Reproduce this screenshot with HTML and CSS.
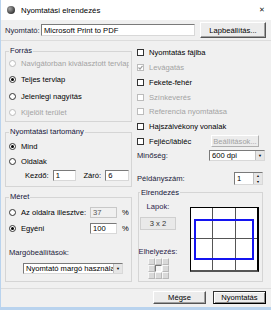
FILE: index.html
```html
<!DOCTYPE html>
<html lang="hu">
<head>
    <meta charset="UTF-8">
    <meta name="viewport" content="width=device-width, initial-scale=1.0">
    <title>Nyomtatási elrendezés</title>
    <link rel="stylesheet" href="styles.css">
</head>
<body>
    <div class="window">
        <div class="titlebar">
            <span class="app-icon"></span>
            <span class="title">Nyomtatási elrendezés</span>
            <span class="close">&#x2715;</span>
        </div>

        <div class="printer-row">
            <span class="printer-label">Nyomtató:</span>
            <div class="field printer-field">Microsoft Print to PDF</div>
            <button class="btn setup-btn">Lapbeállítás...</button>
        </div>

        <div class="main">
            <div class="col-left">
                <fieldset class="group source">
                    <legend>Forrás</legend>
                    <div class="opt disabled"><span class="radio"></span>Navigátorban kiválasztott tervlapok</div>
                    <div class="opt"><span class="radio on"></span>Teljes tervlap</div>
                    <div class="opt"><span class="radio"></span>Jelenlegi nagyítás</div>
                    <div class="opt disabled"><span class="radio"></span>Kijelölt terület</div>
                </fieldset>

                <fieldset class="group range">
                    <legend>Nyomtatási tartomány</legend>
                    <div class="opt"><span class="radio on"></span>Mind</div>
                    <div class="opt"><span class="radio"></span>Oldalak</div>
                    <div class="pages-row">
                        <span class="from-label">Kezdő:</span>
                        <div class="field page-field">1</div>
                        <span class="to-label">Záró:</span>
                        <div class="field page-field">6</div>
                    </div>
                </fieldset>

                <fieldset class="group size">
                    <legend>Méret</legend>
                    <div class="opt"><span class="radio"></span><span class="opt-text">Az oldalra illesztve:</span><div class="field pct-field off">37</div><span class="unit">%</span></div>
                    <div class="opt"><span class="radio on"></span><span class="opt-text">Egyéni</span><div class="field pct-field">100</div><span class="unit">%</span></div>
                    <div class="margin-label">Margóbeállítások:</div>
                    <div class="select margin-select"><span class="select-text">Nyomtató margó használata</span><span class="arrow">&#x25BC;</span></div>
                </fieldset>
            </div>

            <div class="col-right">
                <div class="check-row"><span class="checkbox"></span>Nyomtatás fájlba</div>
                <div class="check-row disabled"><span class="checkbox"><svg width="5" height="5" viewBox="0 0 5 5"><polyline points="0.5,2.5 2,4 4.5,0.8" fill="none" stroke="#a0a0a0" stroke-width="1.2"/></svg></span>Levágatás</div>
                <div class="check-row"><span class="checkbox"></span>Fekete-fehér</div>
                <div class="check-row disabled"><span class="checkbox"></span>Színkeverés</div>
                <div class="check-row disabled"><span class="checkbox"></span>Referencia nyomtatása</div>
                <div class="check-row"><span class="checkbox"></span>Hajszálvékony vonalak</div>
                <div class="check-row"><span class="checkbox"></span>Fejléc/lábléc<button class="btn settings-btn" disabled>Beállítások...</button></div>

                <div class="quality-row">
                    <span>Minőség:</span>
                    <div class="select quality-select"><span class="select-text">600 dpi</span><span class="arrow">&#x25BC;</span></div>
                </div>

                <div class="copies-row">
                    <span>Példányszám:</span>
                    <div class="field spinner"><span class="spin-value">1</span><span class="spin-arrows"><span>&#x25B2;</span><span>&#x25BC;</span></span></div>
                </div>

                <fieldset class="group layout">
                    <legend>Elrendezés</legend>
                    <div class="layout-body">
                        <div class="layout-side">
                            <div class="side-label">Lapok:</div>
                            <div class="pages-box">3 x 2</div>
                            <div class="side-label place-label">Elhelyezés:</div>
                            <div class="place-grid">
                                <span></span><span></span><span></span>
                                <span></span><span class="picked"></span><span></span>
                                <span></span><span></span><span></span>
                            </div>
                        </div>
                        <div class="preview">
                            <span></span><span></span><span></span>
                            <span></span><span></span><span></span>
                            <div class="print-area"></div>
                        </div>
                    </div>
                </fieldset>
            </div>
        </div>

        <div class="footer">
            <button class="btn">Mégse</button>
            <button class="btn default-btn">Nyomtatás</button>
        </div>
    </div>
</body>
</html>
```

FILE: styles.css
```css
body {
    margin: 0;
    background: #b9d3ee;
    font-family: "Liberation Sans", Arial, sans-serif;
    font-size: 7.6px;
    color: #000;
}

.window {
    width: 270px;
    height: 307px;
    margin-left: 1px;
    background: #f0f0f0;
    display: flex;
    flex-direction: column;
}

/* Title bar */
.titlebar {
    height: 20px;
    background: #fff;
    display: flex;
    align-items: center;
    padding: 0 6px 0 6px;
}

.app-icon {
    width: 8px;
    height: 8px;
    border-radius: 50%;
    background: radial-gradient(circle at 35% 35%, #a8a8a8, #3a3a3a 70%, #202020);
}

.title {
    margin-left: 6px;
    font-size: 7.8px;
}

.close {
    margin-left: auto;
    font-size: 7px;
    color: #222;
}

/* Printer */
.printer-row {
    height: 20px;
    display: flex;
    align-items: center;
    padding-left: 4px;
    border-bottom: 1px solid #dcdcdc;
}

.printer-label {
    width: 36px;
    color: #1c1c3a;
}

.field {
    background: #fff;
    border: 1px solid;
    border-color: #7a7a7a #d8d8d8 #d8d8d8 #7a7a7a;
    box-sizing: border-box;
    display: flex;
    align-items: center;
    padding-left: 2px;
    white-space: nowrap;
}

.printer-field {
    width: 154px;
    height: 12px;
}

.btn {
    font-family: inherit;
    font-size: 7.6px;
    color: #000;
    background: #ececec;
    border: 1px solid;
    border-color: #fff #555 #555 #fff;
    box-shadow: inset -1px -1px 0 #a0a0a0;
    padding: 0;
    box-sizing: border-box;
}

.setup-btn {
    margin-left: 5px;
    width: 66px;
    height: 16px;
}

/* Columns */
.main {
    height: 247px;
    display: flex;
    padding-left: 4px;
    border-bottom: 1px solid #dcdcdc;
}

.col-left {
    width: 127px;
    display: flex;
    flex-direction: column;
}

.col-right {
    width: 130px;
    margin-left: 4px;
    padding-top: 4.6px;
    display: flex;
    flex-direction: column;
}

.group {
    margin: 0;
    padding: 0 2px 0 3px;
    border: 1px solid #d5d5d5;
    min-width: 0;
}

.group legend {
    padding: 0 1px;
    line-height: 10px;
    color: #14143a;
}

.opt {
    display: flex;
    align-items: center;
    white-space: nowrap;
    overflow: hidden;
}

.opt.disabled, .check-row.disabled {
    color: #a3a3a3;
}

.radio {
    flex: none;
    width: 7px;
    height: 7px;
    box-sizing: border-box;
    border: 1px solid #333;
    border-radius: 50%;
    background: #fff;
    margin-right: 5px;
    display: flex;
    align-items: center;
    justify-content: center;
}

.opt.disabled .radio {
    border-color: #bcbcbc;
}

.radio.on::after {
    content: "";
    width: 3px;
    height: 3px;
    border-radius: 50%;
    background: #000;
}

.source {
    margin-top: 5px;
    padding-bottom: 0;
}

.source .opt {
    height: 16.5px;
}

.source .opt:first-of-type {
    margin-top: -1px;
}

.range {
    margin-top: 5px;
    padding-top: 2px;
    padding-bottom: 5px;
}

.range .opt {
    height: 15px;
}

.pages-row {
    height: 12px;
    display: flex;
    align-items: center;
    padding-left: 16px;
}

.page-field {
    width: 24px;
    height: 11px;
    margin-left: 4px;
}

.to-label {
    margin-left: 7px;
}

.size {
    margin-top: 5px;
    padding-top: 2px;
    padding-bottom: 7px;
}

.size .opt {
    height: 16px;
}

.opt-text {
    width: 69px;
}

.pct-field {
    width: 27px;
    height: 11px;
}

.pct-field.off {
    background: #f0f0f0;
    border-color: #c8c8c8;
    color: #555;
}

.unit {
    margin-left: 5px;
}

.margin-label {
    margin-top: 12px;
    line-height: 10px;
    color: #1c1c3a;
}

.select {
    height: 11px;
    background: #fff;
    border: 1px solid;
    border-color: #7a7a7a #d8d8d8 #d8d8d8 #7a7a7a;
    box-sizing: border-box;
    display: flex;
    align-items: stretch;
    white-space: nowrap;
    overflow: hidden;
}

.select-text {
    flex: 1;
    padding-left: 2px;
    display: flex;
    align-items: center;
    overflow: hidden;
}

.select .arrow {
    width: 8px;
    background: #e6e6e6;
    border-left: 1px solid #c0c0c0;
    font-size: 4px;
    display: flex;
    align-items: center;
    justify-content: center;
}

.margin-select {
    margin-top: 5px;
    margin-left: 14px;
    width: 100px;
}

/* Right column */
.check-row {
    height: 14.7px;
    display: flex;
    align-items: center;
    padding-left: 1px;
    white-space: nowrap;
}

.checkbox {
    flex: none;
    width: 7px;
    height: 7px;
    box-sizing: border-box;
    border: 1px solid #333;
    background: #fff;
    margin-right: 5px;
    display: flex;
    align-items: center;
    justify-content: center;
}

.check-row.disabled .checkbox {
    border-color: #bcbcbc;
}

.settings-btn {
    margin-left: auto;
    margin-right: 7px;
    width: 48px;
    height: 12px;
    color: #a3a3a3;
    border-color: #fff #b0b0b0 #b0b0b0 #fff;
    box-shadow: none;
}

.quality-row, .copies-row {
    height: 14px;
    display: flex;
    align-items: center;
    padding-left: 1px;
    color: #1c1c3a;
}

.quality-select {
    margin-left: auto;
    width: 56px;
    margin-right: 1px;
    color: #000;
}

.copies-row {
    margin-top: 9.5px;
}

.spinner {
    margin-left: auto;
    margin-right: 3px;
    width: 29px;
    height: 13px;
    padding: 0;
    align-items: stretch;
    color: #000;
}

.spin-value {
    flex: 1;
    padding-left: 2px;
    display: flex;
    align-items: center;
}

.spin-arrows {
    width: 8px;
    background: #e6e6e6;
    border-left: 1px solid #c0c0c0;
    display: flex;
    flex-direction: column;
    font-size: 3.5px;
}

.spin-arrows span {
    flex: 1;
    display: flex;
    align-items: center;
    justify-content: center;
}

.layout {
    margin: 2px 3px 0 2px;
    padding: 0 3px 2px 1px;
}

.layout-body {
    display: flex;
}

.layout-side {
    width: 36px;
    display: flex;
    flex-direction: column;
    align-items: center;
}

.side-label {
    margin-top: 4px;
    line-height: 10px;
    color: #2a1c4a;
}

.pages-box {
    margin-top: 5px;
    width: 36px;
    height: 13px;
    box-sizing: border-box;
    border: 1px solid #cfcfcf;
    background: #e9e9e9;
    display: flex;
    align-items: center;
    justify-content: center;
    color: #333;
}

.place-label {
    margin-top: 17px;
}

.place-grid {
    margin-top: 1px;
    display: grid;
    grid-template-columns: repeat(3, 7px);
    grid-template-rows: repeat(3, 7px);
}

.place-grid span {
    box-sizing: border-box;
    background: #d9d9d9;
    border: 1px solid;
    border-color: #f6f6f6 #b8b8b8 #b8b8b8 #f6f6f6;
}

.place-grid .picked {
    background: #f4f4f4;
    border-color: #777 #fff #fff #777;
}

.preview {
    position: relative;
    margin: 9px 0 0 14px;
    width: 69px;
    height: 65px;
    box-sizing: border-box;
    border: 1px solid #000;
    border-right-width: 2px;
    border-bottom: 2px solid #555;
    background: #555;
    display: grid;
    grid-template-columns: repeat(3, 1fr);
    grid-template-rows: repeat(2, 1fr);
    gap: 1px;
}

.preview span {
    background: #fff;
}

.print-area {
    position: absolute;
    left: 3px;
    top: 11px;
    width: 60px;
    height: 41px;
    box-sizing: border-box;
    border: 2px solid #1414f0;
}

/* Footer */
.footer {
    flex: 1;
    display: flex;
    justify-content: flex-end;
    align-items: flex-start;
    gap: 7px;
    padding: 2px 5px 0 0;
}

.footer .btn {
    width: 53px;
    height: 13px;
}

.default-btn {
    border-color: #333 #000 #000 #333;
    box-shadow: inset 1px 1px 0 #fff, inset -1px -1px 0 #888;
}
```
